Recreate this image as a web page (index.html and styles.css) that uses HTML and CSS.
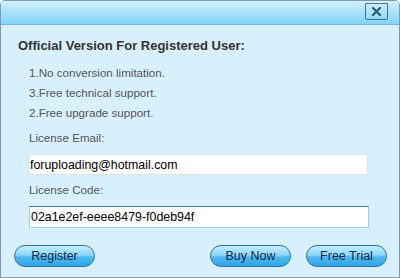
FILE: index.html
```html
<!DOCTYPE html>
<html lang="en">
<head>
  <meta charset="UTF-8">
  <title>Register</title>
  <link rel="stylesheet" href="styles.css">
</head>
<body>
  <div class="window">
    <div class="titlebar">
      <button class="close-btn">
        <svg width="9" height="9" viewBox="0 0 9 9">
          <path d="M1 1 L8 8 M8 1 L1 8" stroke="#2b5a7a" stroke-width="2.2" stroke-linecap="square"/>
        </svg>
      </button>
    </div>
    <div class="content">
      <h1>Official Version For Registered User:</h1>
      <ul class="perks">
        <li>1.No conversion limitation.</li>
        <li>3.Free technical support.</li>
        <li>2.Free upgrade support.</li>
      </ul>
      <label class="field-label">License Email:</label>
      <input class="field" type="text" value="foruploading@hotmail.com">
      <label class="field-label">License Code:</label>
      <input class="field focused" type="text" value="02a1e2ef-eeee8479-f0deb94f">
      <div class="actions">
        <button class="pill">Register</button>
        <span class="spacer"></span>
        <button class="pill">Buy Now</button>
        <button class="pill">Free Trial</button>
      </div>
    </div>
  </div>
</body>
</html>
```

FILE: styles.css
```css
body {
  margin: 0;
  font-family: Arial, "Liberation Sans", sans-serif;
  background: #ffffff;
}

.window {
  width: 400px;
  height: 278px;
  box-sizing: border-box;
  border: 1px solid #7e9bb2;
  border-radius: 5px 5px 0 0;
  background: #d7f0fb;
  display: flex;
  flex-direction: column;
  overflow: hidden;
}

.titlebar {
  height: 21px;
  background: linear-gradient(#d3f0fc, #7fd3f8);
  border-bottom: 1px solid #74b4d4;
  display: flex;
  justify-content: flex-end;
  align-items: flex-start;
  padding: 2px 11px 0 0;
}

.close-btn {
  width: 23px;
  height: 17px;
  padding: 0;
  border: 1px solid #4d6f85;
  border-radius: 0 0 2px 2px;
  background: transparent;
  display: flex;
  align-items: center;
  justify-content: center;
}

.content {
  flex: 1;
  display: flex;
  flex-direction: column;
  padding: 13px 12px 0 17px;
}

h1 {
  margin: 0;
  font-size: 13px;
  font-weight: bold;
  color: #333333;
}

.perks {
  list-style: none;
  margin: 10px 0 0 11px;
  padding: 0;
  font-size: 11.6px;
  color: #555555;
}

.perks li {
  line-height: 20px;
}

.field-label {
  display: block;
  margin: 8px 0 0 11px;
  font-size: 11.6px;
  color: #555555;
  line-height: 14px;
}

.field {
  display: block;
  margin: 9px 0 0 10px;
  width: 340px;
  height: 21px;
  box-sizing: border-box;
  border: 1px solid #dde3e7;
  padding: 0 1px;
  font-family: Arial, "Liberation Sans", sans-serif;
  font-size: 12.4px;
  color: #000000;
  background: #ffffff;
}

.field.focused {
  margin-left: 11px;
  height: 22px;
  border-color: #a9cde4;
  border-top-color: #3f7fb0;
}

.actions {
  display: flex;
  gap: 15px;
  margin: 17px 0 0 -4px;
}

.spacer {
  flex: 1;
}

.pill {
  width: 81px;
  height: 22px;
  padding: 0;
  border: 1px solid #2b76a8;
  border-radius: 11px;
  background: linear-gradient(#c6ecfc 0%, #8ad8f8 45%, #4cb9ef 55%, #2fa6e6 100%);
  color: #1c2a44;
  font-family: Arial, "Liberation Sans", sans-serif;
  font-size: 12.5px;
}
```
